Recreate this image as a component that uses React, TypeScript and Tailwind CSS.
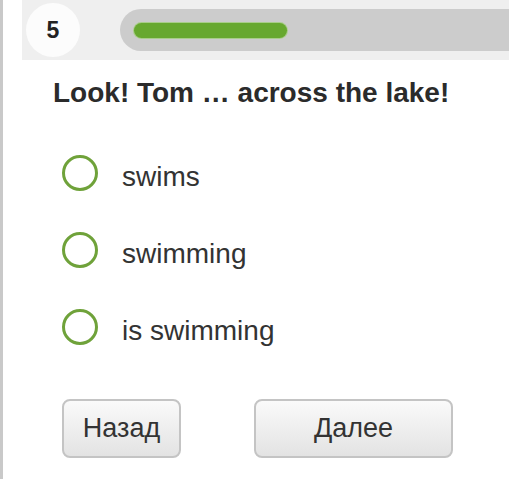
import { useState } from 'react'

const OPTIONS = ['swims', 'swimming', 'is swimming']

export default function App() {
  const [picked, setPicked] = useState<number | null>(null)

  return (
    <div
      className="w-[509px] h-[479px] overflow-hidden bg-white border-l-[3px] border-[#c9c9c9] text-[#333]"
      style={{ fontFamily: '"Liberation Sans", Arial, sans-serif' }}
    >
      {/* Header: question number + progress */}
      <div className="ml-[19px] h-[60px] bg-[#efefef] flex items-center">
        <div className="ml-[4px] w-[54px] h-[54px] rounded-full bg-[#fcfcfc] flex items-center justify-center text-[23px] font-bold text-[#222]">
          5
        </div>
        <div className="ml-[40px] flex-1 -mr-[30px] h-[42px] rounded-full bg-[#cccccc] flex items-center pl-[14px]">
          <div className="w-[153px] h-[15px] rounded-full bg-[#67a82f] ring-1 ring-[#a9cd8a]" />
        </div>
      </div>

      {/* Question */}
      <div className="pl-[50px] pt-[17px] text-[28px] font-bold leading-[32px] text-[#2b2b2b]">
        Look! Tom … across the lake!
      </div>

      {/* Options */}
      <div className="pl-[59px] pt-[46px] flex flex-col gap-[41px]">
        {OPTIONS.map((o, i) => (
          <div
            key={o}
            onClick={() => setPicked(i)}
            className="flex items-center gap-[24px] h-[36px] cursor-pointer"
          >
            <span className="shrink-0 w-[36px] h-[36px] rounded-full border-[3px] border-[#6fa23a] flex items-center justify-center">
              {picked === i && <span className="w-[16px] h-[16px] rounded-full bg-[#6fa23a]" />}
            </span>
            <span className="mt-[8px] text-[28px] leading-[32px] text-[#333]">{o}</span>
          </div>
        ))}
      </div>

      {/* Nav buttons */}
      <div className="pl-[59px] pt-[54px] flex gap-[73px]">
        <button className="w-[119px] h-[59px] rounded-[8px] border-2 border-[#c4c4c4] bg-gradient-to-b from-[#fafafa] to-[#e3e3e3] text-[27px] text-[#333]">
          Назад
        </button>
        <button className="w-[199px] h-[59px] rounded-[8px] border-2 border-[#c4c4c4] bg-gradient-to-b from-[#fafafa] to-[#e3e3e3] text-[27px] text-[#333]">
          Далее
        </button>
      </div>
    </div>
  )
}
